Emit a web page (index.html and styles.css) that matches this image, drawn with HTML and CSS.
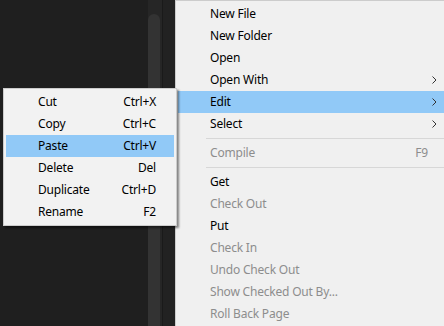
FILE: index.html
```html
<!DOCTYPE html>
<html lang="en">

<head>
    <meta charset="UTF-8">
    <title>Context menu</title>
    <link rel="stylesheet" href="styles.css">
</head>

<body>
    <div class="editor">
        <div class="editor-body"></div>
        <div class="scroll-track">
            <div class="scroll-thumb"></div>
        </div>
        <div class="gutter"></div>
    </div>

    <ul class="menu main-menu">
        <li class="item">New File</li>
        <li class="item">New Folder</li>
        <li class="item">Open</li>
        <li class="item has-sub">Open With
            <svg class="arrow" width="5" height="8" viewBox="0 0 5 8"><path d="M0.5 0.5 L4 4 L0.5 7.5" fill="none" stroke="#333" stroke-width="1"/></svg>
        </li>
        <li class="item has-sub active">Edit
            <svg class="arrow" width="5" height="8" viewBox="0 0 5 8"><path d="M0.5 0.5 L4 4 L0.5 7.5" fill="none" stroke="#333" stroke-width="1"/></svg>
        </li>
        <li class="item has-sub">Select
            <svg class="arrow" width="5" height="8" viewBox="0 0 5 8"><path d="M0.5 0.5 L4 4 L0.5 7.5" fill="none" stroke="#333" stroke-width="1"/></svg>
        </li>
        <li class="separator"></li>
        <li class="item disabled">Compile <span class="shortcut">F9</span></li>
        <li class="separator"></li>
        <li class="item">Get</li>
        <li class="item disabled">Check Out</li>
        <li class="item">Put</li>
        <li class="item disabled">Check In</li>
        <li class="item disabled">Undo Check Out</li>
        <li class="item disabled">Show Checked Out By...</li>
        <li class="item disabled">Roll Back Page</li>
    </ul>

    <ul class="menu sub-menu">
        <li class="item">Cut <span class="shortcut">Ctrl+X</span></li>
        <li class="item">Copy <span class="shortcut">Ctrl+C</span></li>
        <li class="item active">Paste <span class="shortcut">Ctrl+V</span></li>
        <li class="item">Delete <span class="shortcut">Del</span></li>
        <li class="item">Duplicate <span class="shortcut">Ctrl+D</span></li>
        <li class="item">Rename <span class="shortcut">F2</span></li>
    </ul>
</body>

</html>
```

FILE: styles.css
```css
body {
    margin: 0;
    padding: 0;
    width: 444px;
    height: 326px;
    overflow: hidden;
    display: flex;
    background: #1f1f1f;
    font-family: 'Noto Sans', 'Open Sans', sans-serif;
    font-size: 12px;
    letter-spacing: -0.2px;
    position: relative;
}

.editor {
    width: 175px;
    display: flex;
    flex-shrink: 0;
}

.editor-body {
    width: 148px;
    background: #1f1f1f;
}

.scroll-track {
    width: 14px;
    background: #262626;
    padding-top: 14px;
    box-sizing: border-box;
    overflow: hidden;
}

.scroll-thumb {
    width: 12px;
    height: 100%;
    background: #333333;
    border-radius: 6px 6px 0 0;
}

.gutter {
    flex: 1;
    background: #222222;
    border-left: 1px solid #1a1a1a;
}

.menu {
    list-style: none;
    margin: 0;
    background: #f0f0f0;
    border: 1px solid #cccccc;
    padding: 2px;
    box-sizing: border-box;
}

.main-menu {
    flex: 1;
    height: 326px;
    overflow: hidden;
    border-right: none;
    border-bottom: none;
    padding-right: 0;
}

.item {
    height: 22px;
    line-height: 22px;
    padding-left: 32px;
    color: #000;
    display: flex;
    align-items: center;
    white-space: nowrap;
}

.item.active {
    background: #91c9f7;
}

.item.disabled {
    color: #8d8d8d;
}

.shortcut {
    margin-left: auto;
}

.main-menu .shortcut {
    margin-right: 16px;
}

.arrow {
    margin-left: auto;
    margin-right: 7px;
}

.separator {
    height: 1px;
    background: #d7d7d7;
    margin: 3px 0 3px 28px;
}

.sub-menu {
    position: absolute;
    left: 3px;
    top: 88px;
    width: 174px;
    background: #f2f2f2;
    box-shadow: 2px 2px 2px rgba(0, 0, 0, 0.45);
}

.sub-menu .item {
    padding-right: 18px;
}
```
